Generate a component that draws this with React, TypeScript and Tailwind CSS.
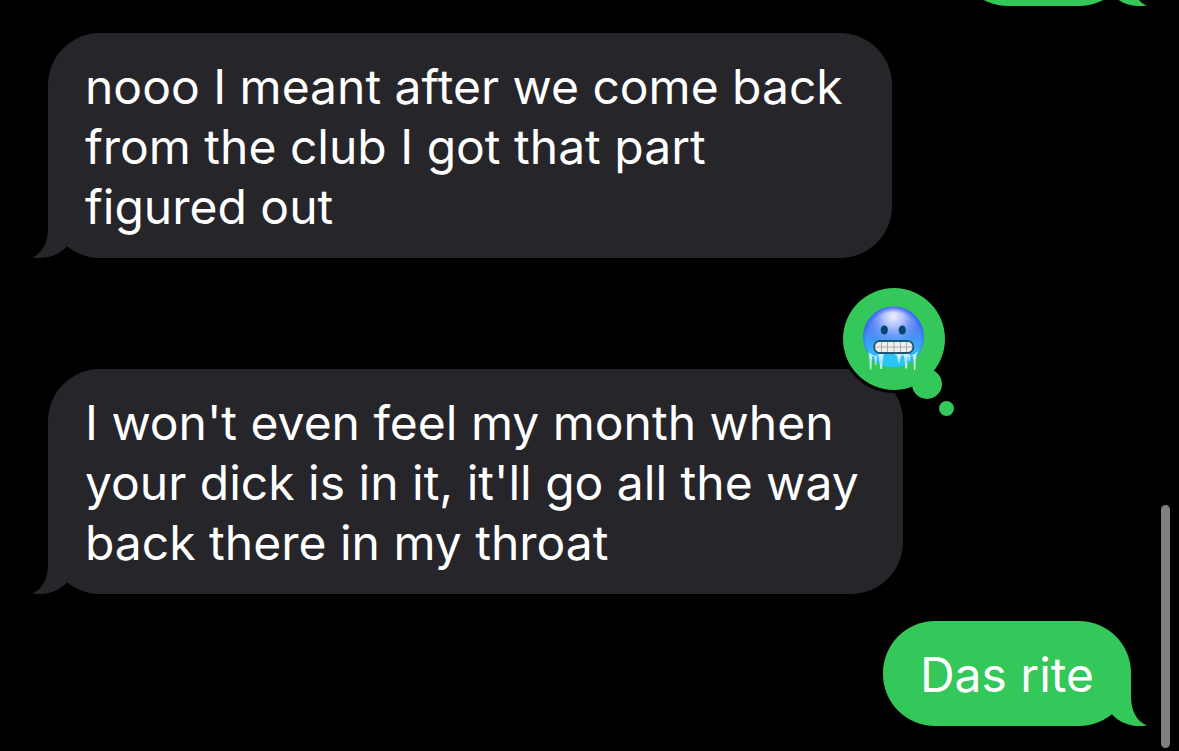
import React, {FC, ReactNode} from 'react';

interface IBubbleProps {
  side: 'left' | 'right';
  className?: string;
  text?: string;
  children?: ReactNode;
}

const Tail: FC<{side: 'left' | 'right'}> = ({side}) => (
  <svg
    viewBox="0 0 40 50"
    aria-hidden="true"
    className={
      side === 'right'
        ? 'absolute bottom-0 -right-4 h-[50px] w-10 fill-[#34c759]'
        : 'absolute bottom-0 -left-4 h-[50px] w-10 -scale-x-100 fill-[#26252a]'
    }
  >
    <path d="M0 0H24V20C24 34 29 45 40 49.5C26 51.5 14 48 5 38.5Z" />
  </svg>
);

const Bubble: FC<IBubbleProps> = ({side, className = '', text, children}) => (
  <div
    className={`relative min-h-[105px] shrink-0 rounded-[52px] px-[37px] pt-6 pb-[21px] ${
      side === 'right' ? 'self-end bg-[#34c759]' : 'self-start bg-[#26252a]'
    } ${className}`}
  >
    <Tail side={side} />
    {text && <p className="relative text-[48px] leading-[60px] text-white">{text}</p>}
    {children}
  </div>
);

const ColdFaceReaction: FC = () => (
  <svg
    viewBox="0 0 117 132"
    role="img"
    aria-label="Cold face"
    className="absolute -top-[84px] -right-[54px] h-[132px] w-[117px]"
  >
    <defs>
      <linearGradient id="face" x1="0" y1="0" x2="0" y2="1">
        <stop offset="0" stopColor="#3c68ef" />
        <stop offset="0.4" stopColor="#4a86f5" />
        <stop offset="0.65" stopColor="#3ba6f9" />
        <stop offset="0.85" stopColor="#2cc4f8" />
        <stop offset="1" stopColor="#25c8ee" />
      </linearGradient>
      <radialGradient id="shine" cx="0.5" cy="0.16" r="0.46">
        <stop offset="0" stopColor="#fbf9ff" stopOpacity="0.95" />
        <stop offset="0.35" stopColor="#dcdcff" stopOpacity="0.75" />
        <stop offset="0.7" stopColor="#a9b8ff" stopOpacity="0.35" />
        <stop offset="1" stopColor="#8fb0ff" stopOpacity="0" />
      </radialGradient>
      <radialGradient id="rim" cy="0.54" r="0.54">
        <stop offset="0.82" stopColor="#2563eb" stopOpacity="0" />
        <stop offset="1" stopColor="#2456ec" stopOpacity="0.85" />
      </radialGradient>
      <linearGradient id="ice" x1="0" y1="0" x2="0" y2="1">
        <stop offset="0" stopColor="#e8fbff" />
        <stop offset="0.5" stopColor="#a5dcf2" />
        <stop offset="1" stopColor="#e4f8ee" />
      </linearGradient>
    </defs>
    <circle cx="54" cy="54" r="54" fill="#000" />
    <circle cx="54" cy="54" r="51" fill="#34c759" />
    <circle cx="87" cy="99" r="15" fill="#34c759" />
    <circle cx="106.5" cy="123.5" r="7.5" fill="#34c759" />
    <circle cx="53.5" cy="52" r="30.5" fill="url(#face)" />
    <circle cx="53.5" cy="52" r="30.5" fill="url(#shine)" />
    <circle cx="53.5" cy="52" r="30.5" fill="url(#rim)" />
    <ellipse cx="44.3" cy="45" rx="3.6" ry="4.6" fill="#06476f" />
    <ellipse cx="62.3" cy="45" rx="3.6" ry="4.6" fill="#06476f" />
    <rect x="34.2" y="56" width="39" height="12" rx="5.5" fill="#f0efec" stroke="#205573" strokeWidth="1.8" />
    <path
      d="M35 62H72.5M41.5 57V67M47.5 57V67M54 57V67M60.5 57V67M66.5 57V67"
      stroke="#a4a4a4"
      strokeWidth="0.9"
    />
    <path
      fill="url(#ice)"
      d="M29 68.5L32.2 72L31.3 84.5H30Z M34.3 72H37L36.2 80H35.2Z M38.5 69H43.5L42 84H40.3Z M56.5 69H61.5L59.5 78H58.3Z M63.8 69H68L67 83.5H65.5Z M68.3 70H70.6L69.6 76H68.8Z M73 70.5L76.5 68L75.2 85H74Z"
    />
    <path
      d="M29 68.5C33 72 37 72 39 69.5H43.5M55.5 69.5C60 69.5 64 71 69 69.5M72.5 70.5C74 70.5 75.5 69.5 77 67.5"
      fill="none"
      stroke="#c3ecfa"
      strokeWidth="1.2"
      strokeLinecap="round"
    />
  </svg>
);

const App: FC = () => {
  return (
    <main className="relative flex h-screen flex-col justify-end overflow-hidden bg-black px-12 pb-[25px] font-[Inter,sans-serif]">
      <Bubble side="right" className="mb-[27px] w-[175px]" />
      <Bubble
        side="left"
        className="mb-[111px] max-w-[844px]"
        text="nooo I meant after we come back from the club I got that part figured out"
      />
      <Bubble
        side="left"
        className="mb-[27px] max-w-[855px]"
        text="I won't even feel my month when your dick is in it, it'll go all the way back there in my throat"
      >
        <ColdFaceReaction />
      </Bubble>
      <Bubble side="right" text="Das rite" />
      <div className="absolute right-[9px] bottom-[3px] h-[243px] w-[9px] rounded-full bg-[#808080]" />
    </main>
  );
};

export default App;
